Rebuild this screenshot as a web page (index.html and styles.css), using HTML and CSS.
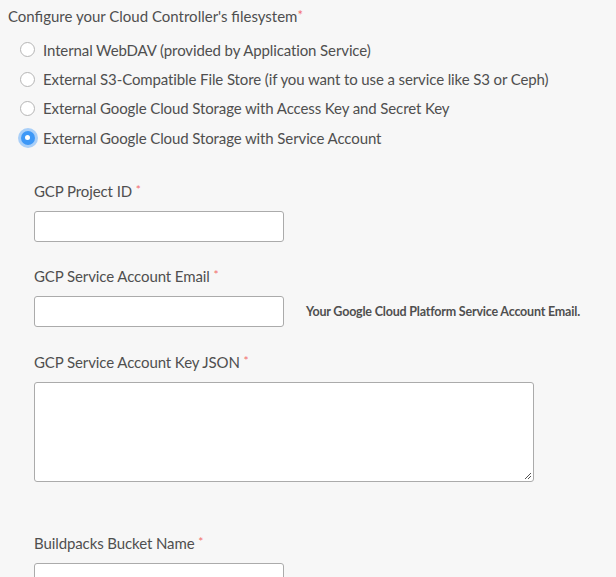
FILE: index.html
```html
<!DOCTYPE html>
<html>
<head>
<meta charset="utf-8">
<link rel="stylesheet" href="styles.css">
</head>
<body>
<div class="page">
  <div class="heading">Configure your Cloud Controller's filesystem<span class="req">*</span></div>
  <div class="radios">
    <label class="radio"><span class="dot"></span>Internal WebDAV (provided by Application Service)</label>
    <label class="radio"><span class="dot"></span>External S3-Compatible File Store (if you want to use a service like S3 or Ceph)</label>
    <label class="radio"><span class="dot"></span>External Google Cloud Storage with Access Key and Secret Key</label>
    <label class="radio"><span class="dot checked"></span>External Google Cloud Storage with Service Account</label>
  </div>
  <div class="fields">
    <div class="field">
      <div class="label">GCP Project ID <span class="req">*</span></div>
      <div class="row"><div class="input"></div></div>
    </div>
    <div class="field field-help">
      <div class="label">GCP Service Account Email <span class="req">*</span></div>
      <div class="row"><div class="input"></div><div class="help">Your Google Cloud Platform Service Account Email.</div></div>
    </div>
    <div class="field field-big">
      <div class="label">GCP Service Account Key JSON <span class="req">*</span></div>
      <div class="row"><div class="textarea"><svg class="grip" width="9" height="9" viewBox="0 0 9 9"><path d="M8 2 L2 8 M8 5 L5 8" stroke="#555" stroke-width="1" fill="none"/></svg></div></div>
    </div>
    <div class="field">
      <div class="label">Buildpacks Bucket Name <span class="req">*</span></div>
      <div class="row"><div class="input"></div></div>
    </div>
  </div>
</div>
</body>
</html>
```

FILE: styles.css
```css
html, body {
  margin: 0;
  padding: 0;
  background: #f7f7f7;
}
body {
  font-family: "Lato", "Liberation Sans", sans-serif;
  font-size: 15px;
  color: #4f4f4f;
  overflow: hidden;
  height: 577px;
}
.page {
  padding: 6px 0 0 8px;
  display: flex;
  flex-direction: column;
}
.heading {
  line-height: 20px;
}
.req {
  color: #f26d6d;
  font-size: 13px;
  vertical-align: top;
  position: relative;
  top: -1px;
}
.radios {
  margin-top: 9px;
  margin-left: 12px;
  display: flex;
  flex-direction: column;
}
.radio {
  display: flex;
  align-items: center;
  height: 29.4px;
  gap: 8px;
  letter-spacing: -0.11px;
}
.dot {
  width: 15px;
  height: 15px;
  border: 1.5px solid #b5b5b5;
  border-radius: 50%;
  background: #fff;
  box-sizing: border-box;
  flex: none;
  position: relative;
}
.dot.checked {
  width: 14px;
  height: 14px;
  margin: 0 0.5px;
  background: #3d98f7;
  border: none;
  box-shadow: 0 0 0 3px #a9cff8;
}
.dot.checked::after {
  content: "";
  position: absolute;
  left: 4.5px;
  top: 4.5px;
  width: 5px;
  height: 5px;
  border-radius: 50%;
  background: #fff;
}
.fields {
  margin-top: 28px;
  margin-left: 26px;
  display: flex;
  flex-direction: column;
}
.field {
  display: flex;
  flex-direction: column;
  margin-bottom: 24px;
}
.field-help {
  margin-bottom: 25px;
}
.field-big {
  margin-bottom: 51px;
}
.label {
  line-height: 20px;
  margin-bottom: 10px;
  letter-spacing: -0.1px;
}
.label .req {
  font-size: 12px;
}
.row {
  display: flex;
  align-items: center;
  gap: 22px;
}
.input {
  width: 250px;
  height: 31px;
  box-sizing: border-box;
  border: 1px solid #ababab;
  border-radius: 3px;
  background: #fff;
}
.textarea {
  width: 500px;
  height: 100px;
  box-sizing: border-box;
  border: 1px solid #ababab;
  border-radius: 3px;
  background: #fff;
  position: relative;
}
.grip {
  position: absolute;
  right: 1px;
  bottom: 1px;
}
.help {
  font-size: 12.5px;
  font-weight: 700;
  letter-spacing: -0.2px;
  color: #4f4f4f;
}
```
